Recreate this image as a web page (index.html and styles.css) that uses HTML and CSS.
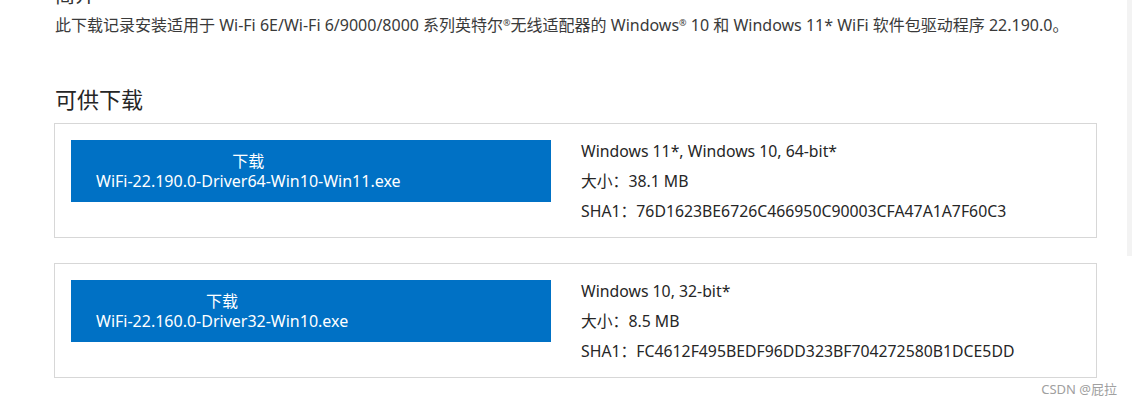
FILE: index.html
```html
<!DOCTYPE html>
<html lang="zh-CN">
<head>
<meta charset="utf-8">
<link rel="stylesheet" href="styles.css">
</head>
<body>
<div class="side-strip"></div>
<main class="page">
  <h3 class="cut-title">简介</h3>
  <p class="intro">此下载记录安装适用于 Wi-Fi 6E/Wi-Fi 6/9000/8000 系列英特尔<sup>®</sup>无线适配器的 Windows<sup>®</sup> 10 和 Windows 11* WiFi 软件包驱动程序 22.190.0。</p>
  <h2 class="section-title">可供下载</h2>
  <div class="card">
    <a class="dl-btn" href="#"><span class="dl-label">下载<br>WiFi-22.190.0-Driver64-Win10-Win11.exe</span></a>
    <div class="meta">
      <div>Windows 11*, Windows 10, 64-bit*</div>
      <div>大小：38.1 MB</div>
      <div>SHA1：76D1623BE6726C466950C90003CFA47A1A7F60C3</div>
    </div>
  </div>
  <div class="card">
    <a class="dl-btn" href="#"><span class="dl-label">下载<br>WiFi-22.160.0-Driver32-Win10.exe</span></a>
    <div class="meta">
      <div>Windows 10, 32-bit*</div>
      <div>大小：8.5 MB</div>
      <div>SHA1：FC4612F495BEDF96DD323BF704272580B1DCE5DD</div>
    </div>
  </div>
  <div class="watermark">CSDN @屁拉</div>
</main>
</body>
</html>
```

FILE: styles.css
```css
html, body {
  margin: 0;
  padding: 0;
  background: #fff;
}
body {
  font-family: "Noto Sans", "Noto Sans CJK SC", sans-serif;
  color: #262626;
  overflow: hidden;
  height: 404px;
  position: relative;
}
.side-strip {
  position: absolute;
  right: 0;
  top: 0;
  width: 5px;
  height: 256px;
  background: #f3f3f3;
}
.page {
  padding-left: 54px;
  width: 1043px;
}
.cut-title {
  margin: -14px 0 0 1px;
  font-size: 20px;
  font-weight: normal;
  line-height: 20px;
  height: 20px;
  color: #333;
}
.intro {
  margin: 7px 0 0 1px;
  font-size: 16px;
  line-height: 24px;
  color: #3a3a3a;
  white-space: nowrap;
}
.intro sup {
  font-size: 9px;
  vertical-align: 5px;
  line-height: 0;
}
.section-title {
  margin: 48px 0 0 1px;
  font-size: 22px;
  font-weight: normal;
  line-height: 28px;
  color: #262626;
}
.card {
  margin-top: 10px;
  border: 1px solid #d7d7d7;
  padding: 12px 16px 11px;
  display: flex;
  gap: 30px;
}
.card + .card {
  margin-top: 25px;
}
.dl-btn {
  margin-top: 4px;
  flex: 0 0 480px;
  height: 62px;
  box-sizing: border-box;
  background: #0071c5;
  color: #fff;
  text-decoration: none;
  display: flex;
  align-items: center;
  padding-left: 25px;
}
.dl-label {
  text-align: center;
  font-size: 16px;
  line-height: 20px;
}
.meta {
  font-size: 15.8px;
  line-height: 30px;
  color: #262626;
}
.watermark {
  position: absolute;
  right: 15px;
  top: 379px;
  font-size: 13px;
  color: #a0a0a0;
}
```
